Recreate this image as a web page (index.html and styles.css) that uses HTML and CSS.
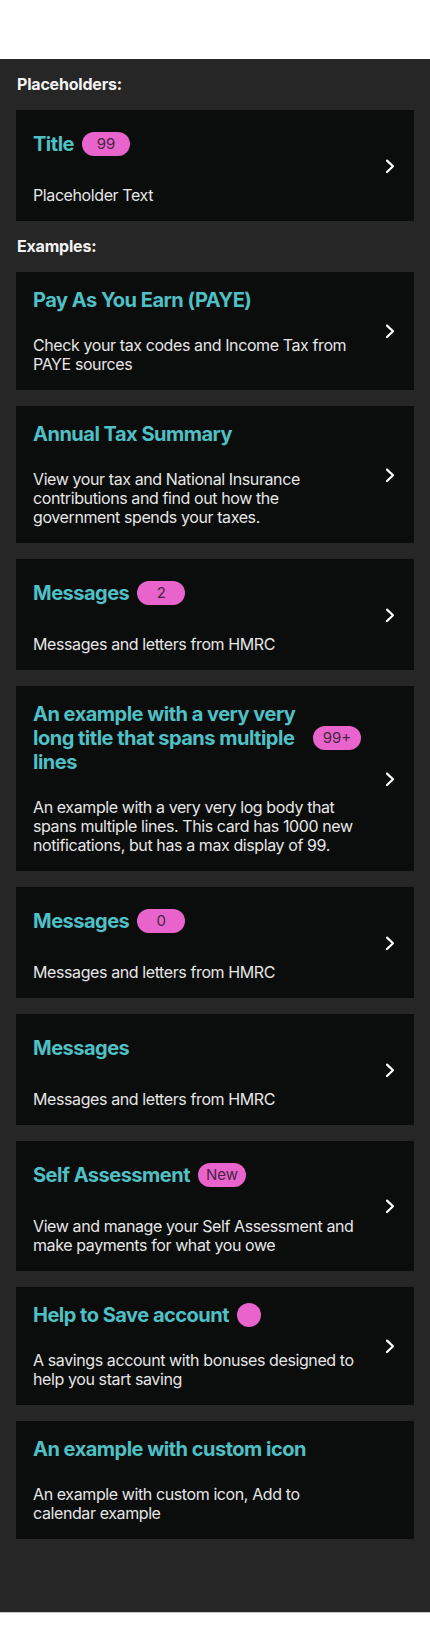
FILE: index.html
```html
<!DOCTYPE html>
<html lang="en">
<head>
<meta charset="utf-8">
<title>Cards</title>
<link rel="stylesheet" href="styles.css">
</head>
<body>
<div class="top-space"></div>
<main class="screen">
  <h2 class="section-label">Placeholders:</h2>
  <div class="card">
    <div class="card-text">
      <div class="title-row tall"><span class="title">Title</span><span class="badge">99</span></div>
      <p class="body">Placeholder Text</p>
    </div>
    <svg class="chev" viewBox="0 0 24 24" width="24" height="24"><path d="M13 6.6 L19 12.3 L13 18" /></svg>
  </div>

  <h2 class="section-label">Examples:</h2>
  <div class="card">
    <div class="card-text">
      <div class="title-row"><span class="title">Pay As You Earn (PAYE)</span></div>
      <p class="body">Check your tax codes and Income Tax from PAYE sources</p>
    </div>
    <svg class="chev" viewBox="0 0 24 24" width="24" height="24"><path d="M13 6.6 L19 12.3 L13 18" /></svg>
  </div>

  <div class="card">
    <div class="card-text">
      <div class="title-row"><span class="title">Annual Tax Summary</span></div>
      <p class="body">View your tax and National Insurance contributions and find out how the government spends your taxes.</p>
    </div>
    <svg class="chev" viewBox="0 0 24 24" width="24" height="24"><path d="M13 6.6 L19 12.3 L13 18" /></svg>
  </div>

  <div class="card">
    <div class="card-text">
      <div class="title-row tall"><span class="title">Messages</span><span class="badge">2</span></div>
      <p class="body">Messages and letters from HMRC</p>
    </div>
    <svg class="chev" viewBox="0 0 24 24" width="24" height="24"><path d="M13 6.6 L19 12.3 L13 18" /></svg>
  </div>

  <div class="card">
    <div class="card-text">
      <div class="title-row tall"><span class="title">An example with a very very long title that spans multiple lines</span><span class="badge">99+</span></div>
      <p class="body">An example with a very very log body that spans multiple lines. This card has 1000 new notifications, but has a max display of 99.</p>
    </div>
    <svg class="chev" viewBox="0 0 24 24" width="24" height="24"><path d="M13 6.6 L19 12.3 L13 18" /></svg>
  </div>

  <div class="card">
    <div class="card-text">
      <div class="title-row tall"><span class="title">Messages</span><span class="badge">0</span></div>
      <p class="body">Messages and letters from HMRC</p>
    </div>
    <svg class="chev" viewBox="0 0 24 24" width="24" height="24"><path d="M13 6.6 L19 12.3 L13 18" /></svg>
  </div>

  <div class="card">
    <div class="card-text">
      <div class="title-row tall"><span class="title">Messages</span></div>
      <p class="body">Messages and letters from HMRC</p>
    </div>
    <svg class="chev" viewBox="0 0 24 24" width="24" height="24"><path d="M13 6.6 L19 12.3 L13 18" /></svg>
  </div>

  <div class="card">
    <div class="card-text">
      <div class="title-row tall"><span class="title">Self Assessment</span><span class="badge">New</span></div>
      <p class="body">View and manage your Self Assessment and make payments for what you owe</p>
    </div>
    <svg class="chev" viewBox="0 0 24 24" width="24" height="24"><path d="M13 6.6 L19 12.3 L13 18" /></svg>
  </div>

  <div class="card">
    <div class="card-text">
      <div class="title-row"><span class="title">Help to Save account</span><span class="dot"></span></div>
      <p class="body">A savings account with bonuses designed to help you start saving</p>
    </div>
    <svg class="chev" viewBox="0 0 24 24" width="24" height="24"><path d="M13 6.6 L19 12.3 L13 18" /></svg>
  </div>

  <div class="card">
    <div class="card-text">
      <div class="title-row"><span class="title">An example with custom icon</span></div>
      <p class="body">An example with custom icon, Add to calendar example</p>
    </div>
    <span class="chev-space"></span>
  </div>
</main>
<div class="bottom-space"></div>
</body>
</html>
```

FILE: styles.css
```css
* { box-sizing: border-box; }

html, body {
  margin: 0;
  padding: 0;
  background: #ffffff;
}

body {
  font-family: Inter, "Liberation Sans", sans-serif;
  -webkit-font-smoothing: antialiased;
}

.top-space {
  height: 59px;
}

.screen {
  background: #262626;
  padding: 16px 16px 73px;
  display: flex;
  flex-direction: column;
  gap: 16px;
  border-bottom: 1px solid #c4c4c4;
}

.section-label {
  margin: 0;
  padding-left: 1px;
  font-size: 16px;
  line-height: 19px;
  font-weight: 700;
  letter-spacing: -0.2px;
  color: #f2f2f2;
}

.card {
  background: #0b0c0c;
  padding: 16px 16px 16px 17px;
  display: flex;
  align-items: center;
}

.card-text {
  flex: 1;
  min-width: 0;
  margin-right: 13px;
  display: flex;
  flex-direction: column;
  gap: 24px;
}

.title-row {
  display: flex;
  align-items: center;
  gap: 8px;
}

.title-row.tall {
  min-height: 36px;
}

.title {
  font-size: 20px;
  line-height: 24px;
  font-weight: 700;
  letter-spacing: -0.5px;
  color: #4fc0c5;
}

.badge {
  flex: none;
  min-width: 48px;
  height: 24px;
  padding: 0 8px;
  border-radius: 12px;
  background: #e864cc;
  color: #4a2544;
  font-size: 15px;
  line-height: 24px;
  text-align: center;
}

.dot {
  flex: none;
  width: 24px;
  height: 24px;
  border-radius: 50%;
  background: #e864cc;
}

.body {
  margin: 0;
  font-size: 16px;
  line-height: 19px;
  letter-spacing: -0.4px;
  color: #e6e6e6;
}

.chev {
  flex: none;
  fill: none;
  stroke: #ffffff;
  stroke-width: 2.2;
  stroke-linecap: round;
  stroke-linejoin: round;
}

.chev-space {
  flex: none;
  width: 24px;
}

.bottom-space {
  height: 34px;
}
```
